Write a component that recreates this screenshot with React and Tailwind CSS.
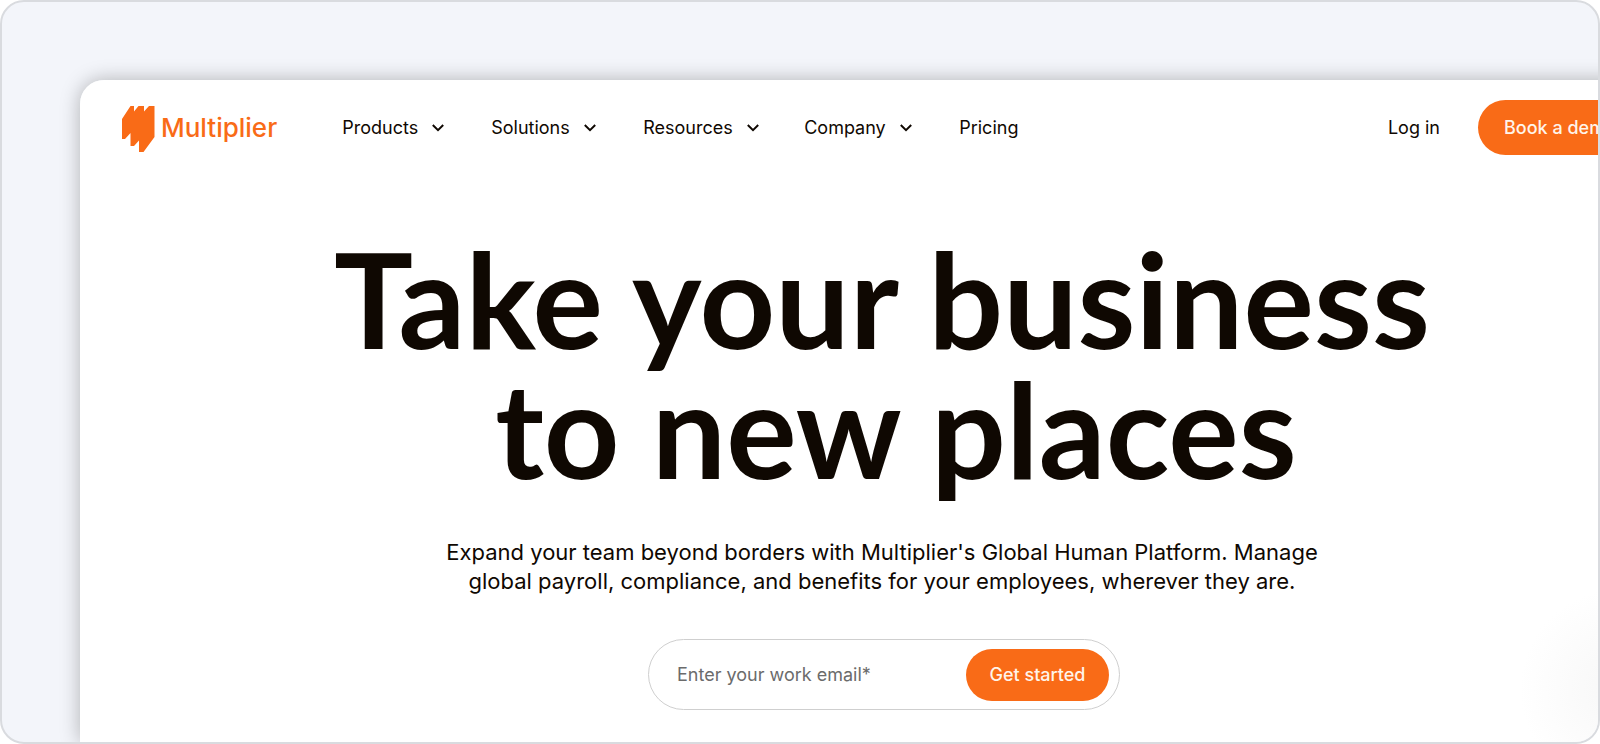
import React, { useState } from "react";

const navItems = [
  { name: "Products", menu: true, width: "w-[149px]" },
  { name: "Solutions", menu: true, width: "w-[152px]" },
  { name: "Resources", menu: true, width: "w-[161px]" },
  { name: "Company", menu: true, width: "w-[155px]" },
  { name: "Pricing", menu: false, width: "w-[64px]" },
];

const Logo = () => (
  <a href="#home" className="flex items-center gap-1.5 pt-0.5 text-[#f96b17]">
    <svg width="33" height="46" viewBox="0 0 33 46" fill="currentColor" aria-hidden="true">
      <path d="M0 13 L8.500 0 H12 V5.500 L16.500 0 H22 V5.500 L27 0 H32.500 V31 L21.500 46 H17 V34.500 L12 40 H8.500 V27 L3 33 H0 Z" />
    </svg>
    <span className="pb-0.5 text-[26px] leading-8 font-medium">Multiplier</span>
  </a>
);

const Chevron = () => (
  <svg width="12" height="8" viewBox="0 0 12 8" fill="none" stroke="currentColor" strokeWidth="2" aria-hidden="true">
    <path d="M0.800 1 L6 6.200 L11.200 1" />
  </svg>
);

const Header = () => (
  <header className="flex items-center px-[42px] pt-5">
    <Logo />
    <nav className="ml-[65px] flex items-center text-lg">
      {navItems.map((item) => (
        <div key={item.name} className={item.width}>
          {item.menu ? (
            <button type="button" className="flex cursor-pointer items-center gap-3.5 whitespace-nowrap">
              {item.name}
              <Chevron />
            </button>
          ) : (
            <a href="#pricing">{item.name}</a>
          )}
        </div>
      ))}
    </nav>
    <div className="ml-auto flex items-center gap-[38px] text-lg whitespace-nowrap">
      <a href="#login">Log in</a>
      <button
        type="button"
        className="h-[55px] w-[164px] cursor-pointer rounded-full bg-[#f96b17] text-lg font-medium text-[#fff4ea]"
      >
        Book a demo
      </button>
    </div>
  </header>
);

const EmailForm = () => {
  const [email, setEmail] = useState("");

  return (
    <form
      className="mt-[43px] ml-1 flex h-[71px] w-[472px] items-center rounded-full border border-[#cfcfcf] pr-2.5 pl-7"
      onSubmit={(e) => e.preventDefault()}
    >
      <input
        type="email"
        aria-label="Work email"
        className="min-w-0 flex-1 text-lg outline-none placeholder:text-[#6b6b6b]"
        placeholder="Enter your work email*"
        value={email}
        onChange={(e) => setEmail(e.target.value)}
      />
      <button
        type="submit"
        className="h-[52px] w-[143px] cursor-pointer rounded-full bg-[#f96b17] text-lg font-medium text-[#fff4ea]"
      >
        Get started
      </button>
    </form>
  );
};

const App = () => {
  return (
    <div className="flex h-screen overflow-hidden rounded-3xl border-2 border-[#d9dbdf] bg-[#f3f5fa] pt-[78px] pl-[78px] font-['Inter',sans-serif] text-[#0f0802]">
      {/* the window runs past the right edge of the frame */}
      <div className="-mr-[86px] flex flex-1 flex-col rounded-tl-3xl bg-[radial-gradient(circle_at_96%_92%,#f7f7f7_0px,#ffffff_100px)] shadow-[0_0_20px_rgba(0,0,0,0.28)]">
        <Header />
        <main className="flex flex-col items-center pt-[78px] text-center">
          <h1 className="font-['Lato',sans-serif] text-[132px] leading-[130px] font-bold whitespace-nowrap">
            Take your business
            <span className="block pl-7">to new places</span>
          </h1>
          <p className="mt-[45px] text-[22px] leading-[29px] whitespace-nowrap">
            Expand your team beyond borders with Multiplier's Global Human Platform. Manage
            <br />
            global payroll, compliance, and benefits for your employees, wherever they are.
          </p>
          <EmailForm />
        </main>
      </div>
    </div>
  );
};

export default App;
